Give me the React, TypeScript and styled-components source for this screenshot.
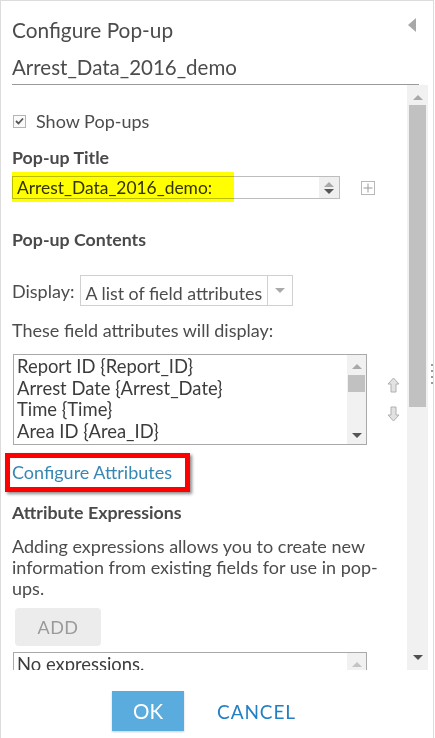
import React from "react";
import styled, { createGlobalStyle } from "styled-components";

const Global = createGlobalStyle`
  html, body { margin: 0; padding: 0; background: #fff; }
  body { font-family: Lato, "Open Sans", sans-serif; color: #4c4c4c; }
  * { box-sizing: border-box; }
`;

const Panel = styled.div`
  width: 434px;
  height: 738px;
  border: 1px solid #dcdcdc;
  border-bottom: none;
  display: flex;
  flex-direction: column;
  overflow: hidden;
`;

const HeaderRow = styled.div`
  display: flex;
  justify-content: space-between;
  align-items: center;
  margin-top: 17px;
  padding: 0 17px 0 11px;
  height: 24px;
  flex-shrink: 0;
`;

const Title = styled.div`
  font-size: 20.8px;
  line-height: 24px;
`;

const Collapse = styled.span`
  width: 0;
  height: 0;
  border-top: 7px solid transparent;
  border-bottom: 7px solid transparent;
  border-right: 8px solid #a8a8a8;
  margin-top: -10px;
`;

const LayerName = styled.div`
  margin: 13px 14px 0 11px;
  font-size: 20.5px;
  line-height: 24px;
  padding-bottom: 5px;
  border-bottom: 1px solid #9a9a9a;
  flex-shrink: 0;
`;

const Body = styled.div`
  display: flex;
  height: 585px;
  flex-shrink: 0;
`;

const Content = styled.div`
  flex: 1;
  overflow: hidden;
  padding-left: 11px;
`;

const Track = styled.div`
  width: 21px;
  background: #f1f1f1;
  display: flex;
  flex-direction: column;
  align-items: center;
  padding: 10px 0 10px;
`;

const Arrow = styled.span<{ $dir: "up" | "down"; $color: string }>`
  flex-shrink: 0;
  width: 0;
  height: 0;
  border-left: 5px solid transparent;
  border-right: 5px solid transparent;
  ${(p) =>
    p.$dir === "up"
      ? `border-bottom: 5px solid ${p.$color};`
      : `border-top: 5px solid ${p.$color};`}
`;

const Thumb = styled.div<{ $w: number; $h: number; $top: number }>`
  flex-shrink: 0;
  width: ${(p) => p.$w}px;
  height: ${(p) => p.$h}px;
  margin-top: ${(p) => p.$top}px;
  background: #c1c1c1;
`;

const Spacer = styled.div`
  flex: 1;
`;

const Resizer = styled.div`
  width: 5px;
  display: flex;
  flex-direction: column;
  align-items: center;
  justify-content: center;
  gap: 4px;
  padding: 0 0 8px 2px;
`;

const Dot = styled.span`
  width: 2px;
  height: 2px;
  background: #9a9a9a;
`;

const CheckRow = styled.label`
  display: flex;
  align-items: center;
  margin-top: 24px;
  height: 24px;
  font-size: 18px;
  gap: 10px;
`;

const CheckBox = styled.span`
  width: 13px;
  height: 13px;
  margin-left: 1px;
  border: 1px solid #b4b4b4;
  background: #fafafa;
  display: flex;
  align-items: center;
  justify-content: center;
`;

const Heading = styled.div<{ $mt: number }>`
  margin-top: ${(p) => p.$mt}px;
  font-size: 17.8px;
  line-height: 24px;
  font-weight: 700;
  color: #4a4a4a;
`;

const InputRow = styled.div`
  margin-top: 7px;
  display: flex;
  align-items: center;
`;

const TitleInput = styled.div`
  position: relative;
  width: 328px;
  height: 23px;
  border: 1px solid #bdbdbd;
  display: flex;
  font-size: 17.4px;
`;

const InputText = styled.div`
  flex: 1;
  padding-left: 4px;
  line-height: 21px;
  color: #333;
`;

const Spinner = styled.div`
  width: 20px;
  background: #efefef;
  display: flex;
  flex-direction: column;
  align-items: center;
  justify-content: center;
  gap: 2px;
`;

const Marker = styled.span`
  position: absolute;
  left: -1px;
  top: -5px;
  width: 222px;
  height: 30px;
  background: #ffff00;
  mix-blend-mode: multiply;
  pointer-events: none;
`;

const PlusBox = styled.span`
  margin-left: 21px;
  width: 14px;
  height: 14px;
  border: 1px solid #b8b8b8;
  display: flex;
  align-items: center;
  justify-content: center;
`;

const DisplayRow = styled.div`
  margin-top: 24px;
  display: flex;
  align-items: center;
  gap: 6px;
  font-size: 18px;
`;

const Select = styled.div`
  width: 213px;
  height: 31px;
  border: 1px solid #d0d0d0;
  display: flex;
  align-items: center;
`;

const SelectText = styled.div`
  flex: 1;
  padding-left: 4px;
  padding-top: 5px;
  white-space: nowrap;
  font-size: 17.8px;
`;

const SelectArrow = styled.div`
  width: 25px;
  height: 100%;
  border-left: 1px solid #d0d0d0;
  display: flex;
  align-items: center;
  justify-content: center;
`;

const Text = styled.div<{ $mt: number }>`
  margin-top: ${(p) => p.$mt}px;
  font-size: 18px;
  line-height: 24px;
`;

const Para = styled.p`
  margin: 12px 20px 0 0;
  font-size: 18px;
  line-height: 21px;
`;

const ListRow = styled.div`
  margin-top: 12px;
  display: flex;
  align-items: center;
`;

const ListBox = styled.div<{ $h: number }>`
  width: 354px;
  height: ${(p) => p.$h}px;
  margin-left: 1px;
  border: 1px solid #a9a9a9;
  display: flex;
  flex-shrink: 0;
`;

const ListItems = styled.div`
  flex: 1;
  padding: 1px 0 0 3px;
  font-size: 18.4px;
  line-height: 21.6px;
  color: #3c3c3c;
  white-space: nowrap;
`;

const MiniTrack = styled.div`
  width: 19px;
  background: #f1f1f1;
  display: flex;
  flex-direction: column;
  align-items: center;
  padding: 9px 0 6px;
`;

const Reorder = styled.div`
  margin-left: 20px;
  display: flex;
  flex-direction: column;
  gap: 13px;
`;

const LinkWrap = styled.div`
  position: relative;
  margin-top: 15px;
  width: fit-content;
`;

const Link = styled.a`
  display: block;
  font-size: 18px;
  line-height: 24px;
  color: #3787b3;
  text-decoration: none;
`;

const RedFrame = styled.span`
  position: absolute;
  left: -7px;
  top: -7px;
  width: 185px;
  height: 39px;
  border: 5px solid #ff0000;
  box-shadow: 2px 2px 3px rgba(0, 0, 0, 0.45);
  pointer-events: none;
`;

const AddButton = styled.button`
  display: block;
  margin: 9px 0 0 3px;
  width: 86px;
  height: 38px;
  border: none;
  border-radius: 4px;
  background: #ececec;
  color: #9a9a9a;
  font-family: inherit;
  font-size: 18px;
  letter-spacing: 0.5px;
  padding: 0;
`;

const ExprBox = styled.div`
  margin-top: 6px;
`;

const Footer = styled.div`
  flex: 1;
  display: flex;
  justify-content: center;
  align-items: flex-start;
  padding: 21px 26px 0 0;
  gap: 33px;
`;

const OkButton = styled.button`
  width: 72px;
  height: 40px;
  border: none;
  background: #5aacdf;
  color: #fff;
  font-family: inherit;
  font-size: 20.5px;
  padding: 0;
  box-shadow: 0 1px 2px rgba(0, 0, 0, 0.2);
`;

const CancelButton = styled.button`
  height: 40px;
  border: none;
  background: none;
  padding: 0;
  color: #237fc3;
  font-family: inherit;
  font-size: 19px;
  letter-spacing: 0.9px;
`;

const MoveArrow = ({ up }: { up: boolean }) => (
  <svg width="13" height="16" viewBox="0 0 13 16">
    <path
      d={
        up
          ? "M6.5 1 L12 7 L9 7 L9 15 L4 15 L4 7 L1 7 Z"
          : "M6.5 15 L12 9 L9 9 L9 1 L4 1 L4 9 L1 9 Z"
      }
      fill="#e2e2e2"
      stroke="#b0b0b0"
      strokeWidth="1"
      strokeLinejoin="round"
    />
  </svg>
);

export default function App() {
  return (
    <>
      <Global />
      <Panel>
        <HeaderRow>
          <Title>Configure Pop-up</Title>
          <Collapse />
        </HeaderRow>
        <LayerName>Arrest_Data_2016_demo</LayerName>
        <Body>
          <Content>
            <CheckRow>
              <CheckBox>
                <svg width="9" height="8" viewBox="0 0 9 8">
                  <path d="M1 4 L3.5 6.5 L8 1.5" fill="none" stroke="#555" strokeWidth="1.8" />
                </svg>
              </CheckBox>
              Show Pop-ups
            </CheckRow>
            <Heading $mt={12}>Pop-up Title</Heading>
            <InputRow>
              <TitleInput>
                <InputText>Arrest_Data_2016_demo:</InputText>
                <Spinner>
                  <Arrow $dir="up" $color="#a9a9a9" />
                  <Arrow $dir="down" $color="#555" />
                </Spinner>
                <Marker />
              </TitleInput>
              <PlusBox>
                <svg width="10" height="10" viewBox="0 0 10 10">
                  <path d="M5 0.5 V9.5 M0.5 5 H9.5" stroke="#9a9a9a" strokeWidth="1" />
                </svg>
              </PlusBox>
            </InputRow>
            <Heading $mt={28}>Pop-up Contents</Heading>
            <DisplayRow>
              Display:
              <Select>
                <SelectText>A list of field attributes</SelectText>
                <SelectArrow>
                  <Arrow $dir="down" $color="#aaa" />
                </SelectArrow>
              </Select>
            </DisplayRow>
            <Text $mt={12}>These field attributes will display:</Text>
            <ListRow>
              <ListBox $h={91}>
                <ListItems>
                  <div>Report ID {"{Report_ID}"}</div>
                  <div>Arrest Date {"{Arrest_Date}"}</div>
                  <div>Time {"{Time}"}</div>
                  <div>Area ID {"{Area_ID}"}</div>
                </ListItems>
                <MiniTrack>
                  <Arrow $dir="up" $color="#a9a9a9" />
                  <Thumb $w={17} $h={17} $top={6} />
                  <Spacer />
                  <Arrow $dir="down" $color="#555" />
                </MiniTrack>
              </ListBox>
              <Reorder>
                <MoveArrow up />
                <MoveArrow up={false} />
              </Reorder>
            </ListRow>
            <LinkWrap>
              <Link href="#">Configure Attributes</Link>
              <RedFrame />
            </LinkWrap>
            <Heading $mt={16}>Attribute Expressions</Heading>
            <Para>
              Adding expressions allows you to create new information from existing fields for use in
              pop-ups.
            </Para>
            <AddButton>ADD</AddButton>
            <ExprBox>
              <ListBox $h={60}>
                <ListItems>
                  <div>No expressions.</div>
                </ListItems>
                <MiniTrack>
                  <Arrow $dir="up" $color="#c4c4c4" />
                </MiniTrack>
              </ListBox>
            </ExprBox>
          </Content>
          <Track>
            <Arrow $dir="up" $color="#a9a9a9" />
            <Thumb $w={17} $h={302} $top={5} />
            <Spacer />
            <Arrow $dir="down" $color="#505050" />
          </Track>
          <Resizer>
            <Dot />
            <Dot />
            <Dot />
            <Dot />
          </Resizer>
        </Body>
        <Footer>
          <OkButton>OK</OkButton>
          <CancelButton>CANCEL</CancelButton>
        </Footer>
      </Panel>
    </>
  );
}
